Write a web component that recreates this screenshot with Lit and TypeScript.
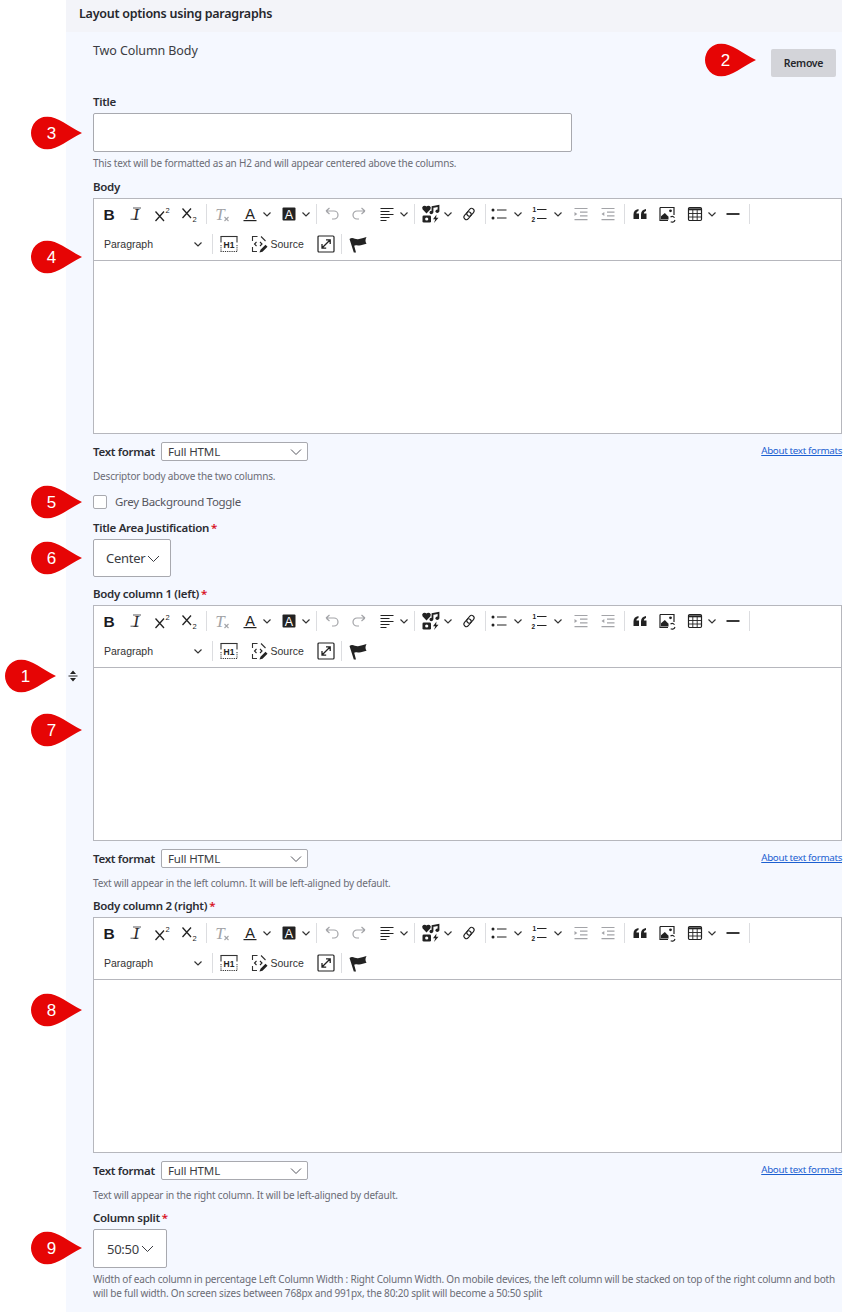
import { LitElement, html, css, svg } from "lit";
import { customElement } from "lit/decorators.js";

const chev = html`<svg class="chev" viewBox="0 0 10 10"><path d="M1.5 3.5 5 7l3.5-3.5" fill="none" stroke="currentColor" stroke-width="1.2"/></svg>`;
const ic = (body: unknown, cls = "") => html`<svg class="ico ${cls}" viewBox="0 0 20 20">${body}</svg>`;

const icons: Record<string, unknown> = {
  bold: ic(svg`<text x="10" y="15.5" text-anchor="middle" font-family="Liberation Sans" font-weight="700" font-size="15.5" fill="#1b1b1f">B</text>`),
  italic: ic(svg`<text x="10" y="15.5" text-anchor="middle" font-family="Liberation Serif" font-style="italic" font-size="17" fill="#2b2b30">I</text><path d="M7 4h8M4.500 15.200h8" stroke="#2b2b30" stroke-width=".8"/>`),
  sup: ic(svg`<path d="M2.500 7.500l8.500 9.500M11 7.500l-8.500 9.500" stroke="#222" stroke-width="1.3" fill="none"/><text x="12.500" y="8.500" font-family="Liberation Sans" font-size="7.500" fill="#222">2</text>`),
  sub: ic(svg`<path d="M2.500 4.500l8.500 9.500M11 4.500l-8.500 9.500" stroke="#222" stroke-width="1.3" fill="none"/><text x="12.500" y="17.500" font-family="Liberation Sans" font-size="7.500" fill="#222">2</text>`),
  clear: ic(svg`<text x="8" y="15.500" text-anchor="middle" font-family="Liberation Serif" font-style="italic" font-size="17" fill="#a3a4a8">T</text><path d="M12.500 13l4 4M16.500 13l-4 4" stroke="#a3a4a8" stroke-width="1.100"/>`),
  color: ic(svg`<text x="10" y="14.500" text-anchor="middle" font-family="Liberation Sans" font-size="14.500" fill="#222">A</text><rect x="3.500" y="16" width="13" height="1.200" fill="#222"/>`),
  bg: ic(svg`<rect x="3.500" y="3.500" width="13" height="13" rx="1" fill="#222"/><text x="10" y="14.500" text-anchor="middle" font-family="Liberation Sans" font-size="12.500" fill="#fff">A</text>`),
  undo: ic(svg`<path d="M4 7 7.500 4M4 7 7.500 10M4 7h8a4 4 0 0 1 0 8h-2" fill="none" stroke="#a3a4a8" stroke-width="1.200"/>`),
  redo: ic(svg`<path d="M16 7 12.500 4M16 7 12.500 10M16 7H8a4 4 0 0 0 0 8h2" fill="none" stroke="#a3a4a8" stroke-width="1.200"/>`),
  align: ic(svg`<path d="M3.500 4.500h13M3.500 7.500h9M3.500 10.500h13M3.500 13.500h9M3.500 16.500h6" stroke="#222" stroke-width="1.100"/>`),
  media: ic(svg`<path d="M5.500 9.500 1.500 5.200a2.400 2.400 0 0 1 4-2.600A2.400 2.400 0 0 1 9.500 5.200Z" fill="#222"/><path d="M11.500 8.500V3l6-1.200v5.500" fill="none" stroke="#222" stroke-width="1.800"/><circle cx="10.300" cy="8.500" r="1.800" fill="#222"/><circle cx="16.300" cy="7.300" r="1.800" fill="#222"/><rect x="1.500" y="11.500" width="8.500" height="7" rx="1.300" fill="#222"/><circle cx="5.700" cy="15" r="1.600" fill="#fff"/><path d="M15.500 10.500 12 15.300h2.300L13 19l4.500-5.200h-2.400Z" fill="#222"/>`),
  link: ic(svg`<g transform="rotate(-50 10 10)" fill="none" stroke="#222" stroke-width="1.100"><rect x="3.500" y="7.500" width="8.500" height="5" rx="2.500"/><rect x="8" y="7.500" width="8.500" height="5" rx="2.500"/></g>`),
  ul: ic(svg`<circle cx="4" cy="6" r="1.500" fill="#222"/><circle cx="4" cy="14" r="1.500" fill="#222"/><path d="M8 6h9.500M8 14h9.500" stroke="#222" stroke-width="1.200"/>`),
  ol: ic(svg`<text x="3.500" y="8" font-family="Liberation Sans" font-weight="700" font-size="6.500" fill="#222">1</text><text x="2.500" y="17.500" font-family="Liberation Sans" font-weight="700" font-size="6.500" fill="#222">2</text><path d="M8 5.500h9.500M8 14.500h9.500" stroke="#222" stroke-width="1.200"/>`),
  indent: ic(svg`<path d="M3.500 4.500h13M9 8.200h7.500M9 11.900h7.500M3.500 15.600h13" stroke="#a3a4a8" stroke-width="1.200"/><path d="M3.500 8v4l2.800-2Z" fill="#a3a4a8"/>`),
  outdent: ic(svg`<path d="M3.500 4.500h13M9 8.200h7.500M9 11.900h7.500M3.500 15.600h13" stroke="#a3a4a8" stroke-width="1.200"/><path d="M6.300 8v4L3.500 10Z" fill="#a3a4a8"/>`),
  quote: ic(svg`<path d="M3.500 15v-4.500C3.500 7.500 5.200 5.500 8.500 5v2C7 7.500 6.400 8.400 6.400 9.500h2.600V15ZM11 15v-4.500C11 7.500 12.700 5.500 16 5v2C14.500 7.500 13.900 8.400 13.900 9.500h2.600V15Z" fill="#222"/>`),
  image: ic(svg`<path d="M3 3.500h14v7.500M3 3.500v13h8" fill="none" stroke="#222" stroke-width="1.200"/><path d="M4 15.500v-3.200l3.800-3.300 3.700 3.800v2.700Z" fill="#222"/><circle cx="13.500" cy="6.800" r="1.400" fill="#222"/><path d="M13.500 13a3 3 0 0 1 4 .8M18 16a3 3 0 0 1-4.300 1.800" fill="none" stroke="#222" stroke-width="1.100"/>`),
  table: ic(svg`<rect x="3.500" y="3.500" width="13" height="13" rx="1.200" fill="none" stroke="#222" stroke-width="1.200"/><path d="M3.500 5.300h13" stroke="#222" stroke-width="2"/><path d="M3.500 9.500h13M3.500 13h13M7.800 6v10M12.200 6v10" stroke="#222" stroke-width=".9"/>`),
  hr: ic(svg`<path d="M3.500 10h13" stroke="#222" stroke-width="1.800"/>`),
  h1: ic(svg`<path d="M1.500 2.500h17" stroke="#333" stroke-width="1.100"/><path d="M1.500 17.500h17" stroke="#333" stroke-width="1" stroke-dasharray="1.200 1"/><path d="M2 2.500v6M18 2.500v6" stroke="#333" stroke-width="1.100"/><path d="M2 11v6M18 11v6" stroke="#333" stroke-width="1" stroke-dasharray="1.200 1"/><text x="10" y="13.500" text-anchor="middle" font-family="Liberation Sans" font-weight="700" font-size="8.500" fill="#222">H1</text>`),
  source: ic(svg`<path d="M8.500 2.500H3.500v4.500M12 2.500l4.500 4.500M3.500 13v4.500h4.500" fill="none" stroke="#333" stroke-width="1.100"/><path d="M7.500 8 5.500 10l2 2M11 8l2 2-2 2" fill="none" stroke="#222" stroke-width="1.100"/><path d="M10.500 18.500l1-2.800 5-5 2 2-5 5Z" fill="#222"/>`),
  full: ic(svg`<rect x="2" y="2" width="16" height="16" rx="1" fill="none" stroke="#222" stroke-width="1.200"/><path d="M6 14l8-8M10 5.800h4.200V10M6 10v4.200h4.200" fill="none" stroke="#222" stroke-width="1.300"/>`),
  flag: ic(svg`<path d="M1.500 5c3-2.500 6 .8 8.500.3 3-.6 5.500-1.500 8.500-2.300-1.500 3-1.200 4.800 0 6.800-3 .5-5.500 2.200-8.500 1.700-1.500-.3-3-.6-3.800.3L8 18.500H5.800Z" fill="#222"/>`),
};

const item = (n: string, cls = "btn") => html`<span class=${cls}>${icons[n]}${cls.startsWith("dd") ? chev : ""}</span>`;
const sep = () => html`<span class="sep"></span>`;

const MARKERS: [string, number, number][] = [
  ["1", 5, 675.5], ["2", 705, 60], ["3", 31, 132.5], ["4", 31, 257], ["5", 31, 501.5],
  ["6", 31, 557.5], ["7", 31, 730], ["8", 31, 1010], ["9", 31, 1248],
];

@customElement("app-root")
export class AppRoot extends LitElement {
  static styles = css`
    :host { display: block; position: relative; width: 850px; height: 1312px; overflow: hidden; background: #fff;
      font-family: "Noto Sans", sans-serif; color: #2c2d33; }
    .panel { margin-left: 66px; width: 776px; height: 1312px; background: #f5f8ff; display: flex; flex-direction: column; }
    .panel-head { height: 32px; flex: none; box-sizing: border-box; padding: 5px 0 0 13px; background: #f3f4f9; font-size: 12.5px; font-weight: 600; line-height: 17px; color: #26272c; letter-spacing: -0.25px; }
    .panel-body { flex: 1; display: flex; }
    .gutter { width: 27px; flex: none; box-sizing: border-box; display: flex; align-items: center; justify-content: center; padding-right: 13px; }
    .handle { width: 10px; height: 12px; margin-top: 8px; flex: none; display: block; }
    .content { flex: 1; min-width: 0; display: flex; flex-direction: column; }
    .top { height: 63px; flex: none; display: flex; justify-content: space-between; align-items: flex-start; }
    .type { font-size: 12.5px; line-height: 18px; margin-top: 10px; color: #3b3c42; letter-spacing: -0.1px; }
    .remove { width: 65px; height: 28px; box-sizing: border-box; padding-bottom: 1px; margin: 17px 6px 0 0; border-radius: 2px; background: #d3d4d9; display: flex; align-items: center; justify-content: center; font-size: 10.5px; font-weight: 600; color: #26272c; letter-spacing: -0.3px; }
    .label { font-size: 11.5px; font-weight: 600; line-height: 14px; height: 14px; margin-bottom: 4px; color: #2c2d33; white-space: nowrap; letter-spacing: -0.3px; }
    .label b { color: #d8121f; font-weight: 600; margin-left: 2px; }
    .input { width: 479px; height: 39px; box-sizing: border-box; background: #fff; border: 1px solid #a8a9af; border-radius: 2px; }
    .desc { font-size: 10px; line-height: 14px; color: #6b6c75; letter-spacing: -0.19px; }
    .mt4 { margin-top: 4px; } .mt8 { margin-top: 8px; } .mt9 { margin-top: 9px; } .mt10 { margin-top: 10px; } .mt12 { margin-top: 12px; }
    .editor { height: 236px; box-sizing: border-box; border: 1px solid #b6b7bd; background: #fff; display: flex; flex-direction: column; }
    .toolbar { height: 62px; flex: none; box-sizing: border-box; border-bottom: 1px solid #b6b7bd; display: flex; flex-direction: column; }
    .row { height: 30px; flex: none; display: flex; align-items: center; padding-left: 1.5px; color: #222; }
    .btn, .dd, .ddw { height: 24px; display: flex; align-items: center; flex: none; }
    .btn { width: 27px; justify-content: center; }
    .dd { width: 39px; padding-left: 4.5px; box-sizing: border-box; }
    .dd .chev { margin-left: 1.5px; }
    .ddw { width: 40px; padding-left: 1.5px; box-sizing: border-box; }
    .ddw .chev { margin-left: 4px; }
    .ico { width: 20px; height: 20px; flex: none; display: block; }
    .chev { width: 10px; height: 10px; flex: none; color: #333; }
    .sep { width: 1px; height: 20px; margin: 0 2px; background: #dcdde0; flex: none; }
    .para { width: 114.5px; height: 24px; flex: none; box-sizing: border-box; padding: 0 7px 0 8.5px; display: flex; align-items: center; justify-content: space-between; font: 10.5px "Liberation Sans", sans-serif; color: #333; }
    .src { width: 70px; height: 24px; flex: none; box-sizing: border-box; padding-left: 6.5px; display: flex; align-items: center; gap: 2px; font: 10.5px "Liberation Sans", sans-serif; color: #333; }
    .fmt { height: 19px; display: flex; align-items: center; justify-content: space-between; }
    .fmt-left { display: flex; align-items: center; gap: 6px; }
    .fmt-label { font-size: 11.5px; font-weight: 600; width: 62px; white-space: nowrap; color: #2c2d33; letter-spacing: -0.3px; }
    .fmt-sel { width: 147px; height: 19px; box-sizing: border-box; border: 1px solid #a8a9af; border-radius: 2px; background: #fff; padding: 0 5px 0 6px; display: flex; align-items: center; justify-content: space-between; font-size: 11.5px; color: #3b3c42; letter-spacing: -0.15px; }
    .fmt-sel svg { width: 12px; height: 12px; flex: none; }
    .link { font-size: 9.8px; color: #1b5fd1; text-decoration: underline; margin-top: -3px; letter-spacing: -0.33px; }
    .check { height: 14px; display: flex; align-items: center; gap: 8px; font-size: 11.5px; color: #55565e; letter-spacing: -0.3px; }
    .check-text { position: relative; top: -1px; }
    .box { width: 14px; height: 14px; box-sizing: border-box; background: #fff; border: 1px solid #a8a9af; border-radius: 2px; }
    .sel { box-sizing: border-box; background: #fff; border: 1px solid #a8a9af; border-radius: 2px; display: flex; align-items: center; font-size: 13px; color: #3b3c42; letter-spacing: -0.25px; }
    .sel .cv { width: 13px; height: 13px; margin-left: 2px; flex: none; }
    .s-center { width: 78px; height: 38px; padding-left: 12px; }
    .s-split { width: 74px; height: 39px; padding-left: 13px; }
    .marker { position: absolute; width: 51px; height: 33px; transform: translateY(-16.5px); }
    .marker svg { position: absolute; inset: 0; width: 51px; height: 33px; display: block; }
    .marker span { position: absolute; left: 0; top: 0; width: 41px; text-align: center; font: 17px/33px "Liberation Sans", sans-serif; color: #fff; }
  `;

  private toolbar() {
    return html`<div class="toolbar">
      <div class="row">
        ${item("bold")}${item("italic")}${item("sup")}${item("sub")}${sep()}
        ${item("clear")}${item("color", "dd")}${item("bg", "dd")}${sep()}
        ${item("undo")}${item("redo")}${item("align", "dd")}${sep()}
        ${item("media", "dd")}${item("link")}${sep()}
        ${item("ul", "ddw")}${item("ol", "ddw")}${item("indent")}${item("outdent")}${sep()}
        ${item("quote")}${item("image")}${item("table", "dd")}${item("hr")}${sep()}
      </div>
      <div class="row">
        <span class="para">Paragraph ${chev}</span>${sep()}
        ${item("h1")}
        <span class="src">${icons.source}Source</span>
        ${item("full")}${sep()}${item("flag")}
      </div>
    </div>`;
  }

  private editor(desc: string) {
    const fc = html`<svg viewBox="0 0 12 12"><path d="M1 3.500 6 8.500l5-5" fill="none" stroke="#55565e" stroke-width="1"/></svg>`;
    return html`<div class="editor">${this.toolbar()}</div>
      <div class="fmt mt8">
        <div class="fmt-left"><span class="fmt-label">Text format</span>
          <span class="fmt-sel">Full HTML ${fc}</span></div>
        <span class="link">About text formats</span>
      </div>
      <div class="desc mt8">${desc}</div>`;
  }

  render() {
    const cv = html`<svg class="cv" viewBox="0 0 13 13"><path d="M1 4l5.500 5.500L12 4" fill="none" stroke="#3b3c42" stroke-width="1"/></svg>`;
    return html`
      <div class="panel">
        <div class="panel-head">Layout options using paragraphs</div>
        <div class="panel-body">
          <div class="gutter">
            <svg class="handle" viewBox="0 0 10 12"><path d="M5 .5 8 4H2ZM5 11.500 2 8h6Z" fill="#222"/><path d="M.5 6h9" stroke="#222" stroke-width="1"/></svg>
          </div>
          <div class="content">
            <div class="top"><span class="type">Two Column Body</span><span class="remove">Remove</span></div>
            <div class="label">Title</div>
            <div class="input"></div>
            <div class="desc mt4">This text will be formatted as an H2 and will appear centered above the columns.</div>
            <div class="label mt10">Body</div>
            ${this.editor("Descriptor body above the two columns.")}
            <div class="check mt12"><span class="box"></span><span class="check-text">Grey Background Toggle</span></div>
            <div class="label mt12">Title Area Justification<b>*</b></div>
            <div class="sel s-center">Center${cv}</div>
            <div class="label mt10">Body column 1 (left)<b>*</b></div>
            ${this.editor("Text will appear in the left column. It will be left-aligned by default.")}
            <div class="label mt9">Body column 2 (right)<b>*</b></div>
            ${this.editor("Text will appear in the right column. It will be left-aligned by default.")}
            <div class="label mt9">Column split<b>*</b></div>
            <div class="sel s-split">50:50${cv}</div>
            <div class="desc mt4">Width of each column in percentage Left Column Width : Right Column Width. On mobile devices, the left column will be stacked on top of the right column and both will be full width. On screen sizes between 768px and 991px, the 80:20 split will become a 50:50 split</div>
          </div>
        </div>
      </div>
      ${MARKERS.map(([n, x, y]) => html`<div class="marker" style="left:${x}px;top:${y}px">
        <svg viewBox="0 0 51 33"><path d="M16.500 0C26 0 38 10 51 16.500 38 23 26 33 16.500 33A16.500 16.500 0 0 1 16.500 0Z" fill="#e60505"/></svg>
        <span>${n}</span></div>`)}
    `;
  }
}
